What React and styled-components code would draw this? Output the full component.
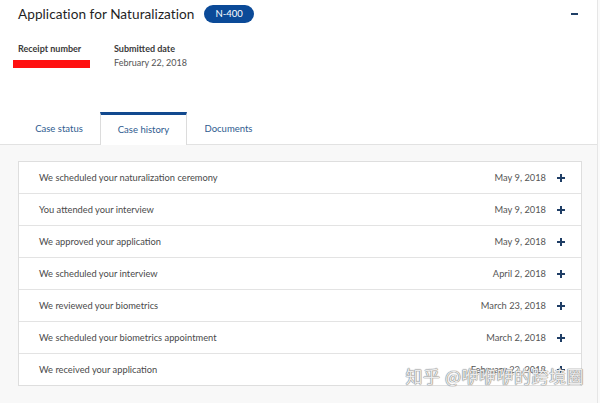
import React from 'react';
import styled, { createGlobalStyle } from 'styled-components';

const GlobalStyle = createGlobalStyle`
  body {
    margin: 0;
    background: #ffffff;
    font-family: Lato, "Open Sans", "Liberation Sans", sans-serif;
  }
`;

const Page = styled.div`
  position: relative;
  width: 600px;
  height: 403px;
  overflow: hidden;
  background: #fafafa;
`;

const Card = styled.div`
  width: 597px;
  height: 403px;
  background: #ffffff;
  border-right: 1px solid #e6e6e6;
  display: flex;
  flex-direction: column;
`;

const Header = styled.div`
  padding: 4px 19px 0 18px;
  height: 108px;
`;

const TitleRow = styled.div`
  display: flex;
  align-items: center;
  height: 19px;
`;

const Title = styled.h1`
  margin: 0;
  font-size: 13.6px;
  font-weight: 400;
  color: #1f1f1f;
  letter-spacing: 0.05px;
`;

const Badge = styled.span`
  margin-left: 10px;
  background: #0b4a98;
  color: #ffffff;
  font-size: 9.5px;
  line-height: 18px;
  padding: 0 11px;
  border-radius: 9px;
`;

const Collapse = styled.span`
  margin-left: auto;
  width: 7px;
  height: 2px;
  background: #1f3e66;
`;

const Meta = styled.div`
  display: flex;
  gap: 28px;
  margin-top: 20px;
`;

const Field = styled.div`
  display: flex;
  flex-direction: column;
  gap: 3px;
  width: ${p => p.width}px;
`;

const Label = styled.div`
  font-size: 9px;
  font-weight: 700;
  color: #3a3a3a;
  line-height: 11px;
`;

const Value = styled.div`
  font-size: 9px;
  color: #555555;
  line-height: 11px;
`;

const Redacted = styled.div`
  width: 77px;
  height: 8px;
  background: #ff1010;
  margin: 3px 0 0 -5px;
`;

const Tabs = styled.div`
  display: flex;
  padding-left: 18px;
  border-bottom: 1px solid #e2e2e2;
  height: 32px;
`;

const Tab = styled.div`
  width: ${p => p.width}px;
  display: flex;
  align-items: center;
  justify-content: center;
  font-size: 9.5px;
  color: #2e5b8f;
  box-sizing: border-box;
  background: ${p => (p.active ? '#ffffff' : 'transparent')};
  border-top: 3px solid ${p => (p.active ? '#12498f' : 'transparent')};
  border-left: 1px solid ${p => (p.active ? '#dcdcdc' : 'transparent')};
  border-right: 1px solid ${p => (p.active ? '#dcdcdc' : 'transparent')};
  margin-bottom: ${p => (p.active ? '-1px' : '0')};
  padding-bottom: ${p => (p.active ? '1px' : '3px')};
`;

const Body = styled.div`
  flex: 1;
  background: #f8f8f8;
  padding: 16px 15px 0 18px;
`;

const List = styled.div`
  background: #ffffff;
  border: 1px solid #dedede;
`;

const Row = styled.div`
  display: flex;
  align-items: center;
  height: 31px;
  padding: 0 16px 0 20px;
  border-top: ${p => (p.first ? 'none' : '1px solid #e3e3e3')};
  font-size: 9.3px;
  color: #4a4a4a;
`;

const Event = styled.span`
  flex: 1;
`;

const EventDate = styled.span`
  color: #555555;
`;

const Plus = styled.span`
  margin-left: 11px;
  width: 8px;
  height: 8px;
  position: relative;
  &::before,
  &::after {
    content: '';
    position: absolute;
    background: #1f3e66;
  }
  &::before {
    left: 0;
    top: 3px;
    width: 8px;
    height: 2px;
  }
  &::after {
    top: 0;
    left: 3px;
    width: 2px;
    height: 8px;
  }
`;

const Watermark = styled.div`
  position: absolute;
  right: 16px;
  bottom: 15px;
  font-family: "Noto Sans CJK SC", sans-serif;
  font-size: 17px;
  color: rgba(255, 255, 255, 0.85);
  text-shadow: 0 0 1px #888, 0 0 1px #888, 0 0 1px #888;
  letter-spacing: 0.5px;
`;

const events = [
  ['We scheduled your naturalization ceremony', 'May 9, 2018'],
  ['You attended your interview', 'May 9, 2018'],
  ['We approved your application', 'May 9, 2018'],
  ['We scheduled your interview', 'April 2, 2018'],
  ['We reviewed your biometrics', 'March 23, 2018'],
  ['We scheduled your biometrics appointment', 'March 2, 2018'],
  ['We received your application', 'February 22, 2018'],
];

const App = () => {
  return (
    <Page>
      <GlobalStyle />
      <Card>
        <Header>
          <TitleRow>
            <Title>Application for Naturalization</Title>
            <Badge>N-400</Badge>
            <Collapse />
          </TitleRow>
          <Meta>
            <Field width={68}>
              <Label>Receipt number</Label>
              <Redacted />
            </Field>
            <Field width={100}>
              <Label>Submitted date</Label>
              <Value>February 22, 2018</Value>
            </Field>
          </Meta>
        </Header>

        <Tabs>
          <Tab width={82}>Case status</Tab>
          <Tab width={87} active>Case history</Tab>
          <Tab width={83}>Documents</Tab>
        </Tabs>

        <Body>
          <List>
            {events.map((e, key) => (
              <Row key={key} first={key === 0}>
                <Event>{e[0]}</Event>
                <EventDate>{e[1]}</EventDate>
                <Plus />
              </Row>
            ))}
          </List>
        </Body>
      </Card>
      <Watermark>知乎 @咿咿咿的跨境圈</Watermark>
    </Page>
  );
};

export default App;
